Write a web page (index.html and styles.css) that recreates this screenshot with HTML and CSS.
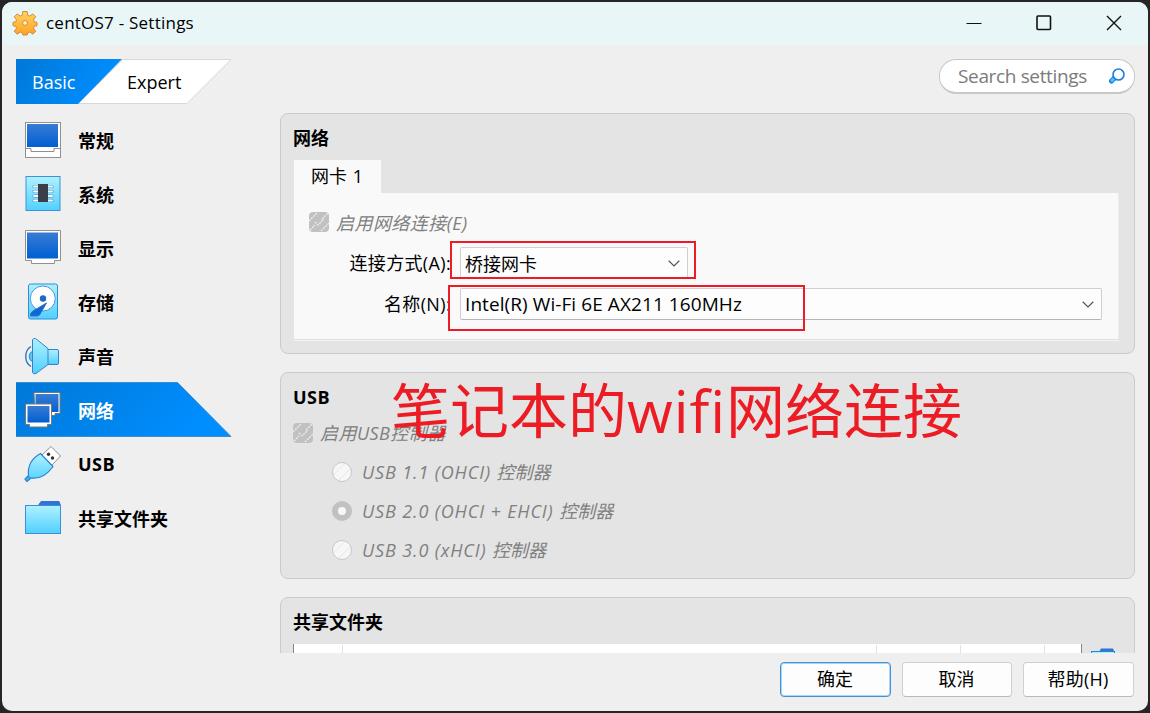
FILE: index.html
```html
<!DOCTYPE html>
<html lang="zh-CN">
  <head>
    <meta charset="UTF-8" />
    <title>centOS7 - Settings</title>
    <link rel="stylesheet" href="styles.css">
  </head>
  <body>
    <svg width="0" height="0" class="defs">
      <defs>
        <linearGradient id="cyan" x1="0" y1="0" x2="0" y2="1">
          <stop offset="0" stop-color="#b0f1ff" />
          <stop offset="1" stop-color="#50d0ff" />
        </linearGradient>
        <linearGradient id="blue" x1="0" y1="0" x2="0" y2="1">
          <stop offset="0" stop-color="#387bd4" />
          <stop offset="1" stop-color="#0060d2" />
        </linearGradient>
        <linearGradient id="gold" x1="0" y1="0" x2="0" y2="1">
          <stop offset="0" stop-color="#ffd45e" />
          <stop offset="1" stop-color="#fba325" />
        </linearGradient>
        <linearGradient id="accent" x1="0" y1="0" x2="1" y2="0.25">
          <stop offset="0" stop-color="#0078d7" />
          <stop offset="1" stop-color="#008eff" />
        </linearGradient>
      </defs>
    </svg>

    <div class="window">
      <div class="titlebar">
        <svg class="gear" width="26" height="26" viewBox="-13 -13 26 26">
          <g fill="url(#gold)" stroke="#d9883d" stroke-width="1">
            <path d="M-2.200-11.500h4.400l.6 3.800 2 .8 3-2.200 2.900 2.900-2.200 3 .8 2 2.700.5v3.400l-2.700.6-.8 2 2.200 3-2.900 2.900-3-2.200-2 .8-.6 2.200h-4.400l-.6-2.200-2-.8-3 2.200-2.900-2.900 2.200-3-.8-2-2.700-.6v-3.400l2.700-.5.8-2-2.200-3 2.900-2.900 3 2.200 2-.8z" />
            <circle r="2.400" fill="#fff3cf" />
          </g>
        </svg>
        <span class="caption">centOS7 - Settings</span>
        <div class="controls">
          <svg width="16" height="16" viewBox="0 0 16 16"><path d="M.5 8.500h15" /></svg>
          <svg width="16" height="16" viewBox="0 0 16 16"><rect x="1" y="1" width="13.500" height="13.500" rx="1" stroke-width="1.600" /></svg>
          <svg width="16" height="16" viewBox="0 0 16 16"><path d="M1 1l14 14M15 1L1 15" stroke-width="1.400" /></svg>
        </div>
      </div>

      <div class="toolbar">
        <div class="modes">
          <svg class="modes-bg" width="218" height="46" viewBox="0 0 218 46">
            <path d="M107 .5H215L171 44.500H62z" fill="#fff" stroke="#d8d8d8" />
            <path d="M0 0H106L62 45H0z" fill="url(#accent)" />
          </svg>
          <span class="mode basic">Basic</span>
          <span class="mode expert">Expert</span>
        </div>
        <div class="search">
          <span>Search settings</span>
          <svg width="16" height="16" viewBox="0 0 16 16">
            <path d="M5.500 10L2.500 13" stroke="#1681de" stroke-width="5" stroke-linecap="round" />
            <path d="M4.500 11L3 12.500" stroke="#4fc6ff" stroke-width="3" stroke-linecap="round" />
            <circle cx="9.500" cy="6.500" r="5.500" fill="#fff" stroke="#1c80df" stroke-width="1.600" />
          </svg>
        </div>
      </div>

      <div class="main">
        <div class="sidebar">
          <div class="item">
            <svg width="38" height="38" viewBox="0 0 38 38">
              <rect x="1.500" y="1.500" width="35" height="35" fill="#fff" stroke="#909090" />
              <rect x="3" y="3" width="31" height="23" fill="url(#blue)" />
              <path d="M2 27.500h5v3h23v-3h6" fill="none" stroke="#909090" />
            </svg>
            <span>常规</span>
          </div>
          <div class="item">
            <svg width="38" height="38" viewBox="0 0 38 38">
              <rect x="2" y="1.500" width="34" height="34" fill="url(#cyan)" stroke="#3a93de" />
              <path d="M10 11.500h18M10 16.500h18M10 21h18M10 25.500h18" stroke="#4595c9" stroke-width="3.200" stroke-linecap="round" />
              <path d="M10 11.500h18M10 16.500h18M10 21h18M10 25.500h18" stroke="#fff" stroke-width="1.900" stroke-linecap="round" />
              <rect x="14" y="9" width="10" height="18" fill="#3a3e48" />
            </svg>
            <span>系统</span>
          </div>
          <div class="item">
            <svg width="38" height="38" viewBox="0 0 38 38">
              <path d="M1.500 1.500h35v30h-6v3h-23v-3h-6z" fill="#fff" stroke="#909090" />
              <rect x="3" y="3.500" width="31" height="26" fill="url(#blue)" />
            </svg>
            <span>显示</span>
          </div>
          <div class="item">
            <svg width="38" height="38" viewBox="0 0 38 38">
              <rect x="4.500" y="1" width="29" height="35" rx="2" fill="url(#cyan)" stroke="#2e8cdb" />
              <circle cx="18.800" cy="15.500" r="12.500" fill="#fff" stroke="#4a98df" />
              <circle cx="19" cy="15.500" r="3.200" fill="#1c69c9" />
              <path d="M22.500 20L9 28q-3 2-2.500 5h7q3-1 3.500-3.500z" fill="#0f67cf" stroke="#2c74c9" stroke-linejoin="round" />
            </svg>
            <span>存储</span>
          </div>
          <div class="item">
            <svg width="38" height="38" viewBox="0 0 38 38">
              <path d="M7 9.500c-7 4-7 16 0 20" fill="none" stroke="#2c74c9" stroke-width="1.400" />
              <path d="M9 14c-5 2-5 9 0 11z" fill="#56c8f8" stroke="#2c82d2" />
              <path d="M23 12.500h10q1.500 0 1.500 1.500v12q0 1.500-1.500 1.500H23z" fill="url(#cyan)" stroke="#3482d1" />
              <path d="M8.500 2.500q0-1 3-1L24 11.500v16L12 36.500q-3 1-3.500-1z" fill="url(#cyan)" stroke="#3482d1" />
            </svg>
            <span>声音</span>
          </div>
          <div class="item active">
            <svg class="active-bg" width="216" height="55" viewBox="0 0 216 55">
              <path d="M0 .5H161.500L215 54.500H0" fill="url(#accent)" stroke="#388ed1" />
            </svg>
            <svg width="38" height="38" viewBox="0 0 38 38">
              <path d="M10 1.500h26v21h-5v2h-20z" fill="#fff" stroke="#777" />
              <rect x="11.500" y="3" width="23" height="18" fill="url(#blue)" />
              <path d="M1.500 13h26v20.500h-4v2.500h-18v-2.500h-4z" fill="#fff" stroke="#777" />
              <rect x="3.500" y="15" width="22" height="16.500" fill="url(#blue)" />
            </svg>
            <span>网络</span>
          </div>
          <div class="item">
            <svg width="38" height="38" viewBox="0 0 38 38">
              <path d="M18 10l9-8.500 9.500 9.500L28 20z" fill="#fff" stroke="#8e8e8e" />
              <path d="M16.500 8.500L29 21.500Q20 34.500 7 33L3 36.500l-2-2.500 3.500-3.500Q3 16 16.500 8.500z" fill="url(#cyan)" stroke="#2c84d5" stroke-width="1.200" />
              <path d="M4.500 31L1 34l2 2.500 3.500-3.500z" fill="#35b0f0" stroke="#2c84d5" />
              <circle cx="24.500" cy="9.300" r="1.700" fill="#333" />
              <circle cx="28.500" cy="13" r="1.700" fill="#333" />
            </svg>
            <span class="usb-label">USB</span>
          </div>
          <div class="item">
            <svg width="38" height="38" viewBox="0 0 38 38">
              <path d="M14 7l3-4.500h18l1.500 4z" fill="#2f75d6" stroke="#2f75d6" />
              <rect x="1.500" y="6.500" width="35" height="28" fill="url(#cyan)" stroke="#3b8ed9" />
            </svg>
            <span>共享文件夹</span>
          </div>
        </div>

        <div class="content">
          <div class="panel network">
            <h2>网络</h2>
            <div class="tab">网卡 1</div>
            <div class="pane">
              <div class="check-row disabled">
                <span class="box"><svg width="20" height="20" viewBox="0 0 20 20"><path d="M0 9l8-8M1 18l5-5M13 7l7-7M12 19l8-8M6 10l3 3 6-6" /></svg></span>
                <span>启用网络连接(E)</span>
              </div>
              <div class="field">
                <label>连接方式(A):</label>
                <div class="combo short"><span>桥接网卡</span><svg width="12" height="7" viewBox="0 0 12 7"><path d="M.7.8L6 6 11.300.8" /></svg></div>
              </div>
              <div class="field">
                <label>名称(N):</label>
                <div class="combo"><span class="adapter">Intel(R) Wi-Fi 6E AX211 160MHz</span><svg width="12" height="7" viewBox="0 0 12 7"><path d="M.7.8L6 6 11.300.8" /></svg></div>
              </div>
            </div>
          </div>

          <div class="panel usb">
            <h2 class="usb-label">USB</h2>
            <div class="check-row disabled">
              <span class="box"><svg width="20" height="20" viewBox="0 0 20 20"><path d="M0 9l8-8M1 18l5-5M13 7l7-7M12 19l8-8M6 10l3 3 6-6" /></svg></span>
              <span>启用USB控制器</span>
            </div>
            <div class="radio-row disabled"><span class="radio"></span><span><b>USB 1.1 (OHCI) </b>控制器</span></div>
            <div class="radio-row disabled"><span class="radio on"></span><span><b>USB 2.0 (OHCI + EHCI) </b>控制器</span></div>
            <div class="radio-row disabled"><span class="radio"></span><span><b>USB 3.0 (xHCI) </b>控制器</span></div>
          </div>

          <div class="panel shared">
            <h2>共享文件夹</h2>
            <div class="shared-row">
              <div class="table"><i></i><i></i><i></i><i></i><i></i></div>
              <svg width="24" height="24" viewBox="0 0 24 24">
                <path d="M8 4l2-3.500h12l1.500 3.500z" fill="#2f75d6" />
                <rect x=".5" y="3.500" width="23" height="18" fill="url(#cyan)" stroke="#2585d8" />
              </svg>
            </div>
          </div>
        </div>
      </div>

      <div class="footer">
        <button class="primary">确定</button>
        <button>取消</button>
        <button class="help">帮助(H)</button>
      </div>
    </div>

    <!-- hand-drawn notes over the dialog -->
    <div class="mark mark-mode"></div>
    <div class="mark mark-name"></div>
    <div class="note">笔记本的<span>wifi</span>网络连接</div>
  </body>
</html>
```

FILE: styles.css
```css
* {
  box-sizing: border-box;
}
body {
  margin: 0;
  padding: 2px;
  width: 1150px;
  height: 713px;
  overflow: hidden;
  background: #262425;
  color: #000;
  font-family: "Open Sans", "Noto Sans CJK SC", sans-serif;
  font-size: 18px;
}
.defs {
  position: absolute;
}
.window {
  height: 709px;
  width: 1146px;
  background: #efefef;
  border-radius: 10px;
  overflow: hidden;
  display: flex;
  flex-direction: column;
}
.titlebar {
  height: 43px;
  flex: none;
  background: #e8f6f7;
  display: flex;
  align-items: center;
  padding: 0 26px 2px 10px;
}
.caption {
  margin-left: 8px;
  font-size: 17px;
  letter-spacing: 0.23px;
  white-space: nowrap;
}
.controls {
  margin-left: auto;
  display: flex;
  gap: 54px;
}
.controls svg {
  fill: none;
  stroke: #111;
}
.toolbar {
  height: 67px;
  flex: none;
  padding: 14px 13px 0 14px;
  display: flex;
  justify-content: space-between;
}
.modes {
  position: relative;
  width: 218px;
  height: 46px;
  display: flex;
  align-items: center;
}
.modes-bg {
  position: absolute;
  top: 0;
  left: 0;
}
.mode {
  position: relative;
}
.basic {
  width: 95px;
  padding-left: 16px;
  color: #fff;
}
.expert {
  padding-left: 16px;
}
.search {
  width: 196px;
  height: 35px;
  background: #fff;
  border: 1px solid #c8c8c8;
  border-bottom-width: 2px;
  border-radius: 17px;
  padding: 0 9px 0 18px;
  display: flex;
  align-items: center;
  justify-content: space-between;
  color: #7b7b7b;
  font-size: 19px;
  letter-spacing: -0.35px;
  white-space: nowrap;
}
.search svg {
  fill: none;
}
.main {
  height: 541px;
  flex: none;
  display: flex;
  padding: 0 13px 0 14px;
}
.sidebar {
  width: 264px;
  flex: none;
}
.item {
  position: relative;
  height: 54px;
  display: flex;
  align-items: center;
  gap: 16px;
  padding: 2px 0 0 8px;
  font-weight: bold;
}
.item svg,
.item span {
  position: relative;
}
.item .active-bg {
  position: absolute;
  top: 0;
  left: 0;
}
.item.active {
  color: #fff;
}
.usb-label {
  letter-spacing: 0.5px;
}
.content {
  width: 855px;
  overflow: hidden;
  padding-top: 1px;
}
.panel {
  background: #e4e4e4;
  border: 1px solid #cbcbcb;
  border-radius: 8px;
  padding: 11px 12px 0;
  margin-bottom: 18px;
}
h2 {
  margin: 0;
  height: 27px;
  line-height: 26px;
  font-size: 18px;
}
.network {
  height: 241px;
  padding-left: 13px;
}
.network h2 {
  margin-left: -1px;
}
.tab {
  width: 87px;
  height: 33px;
  margin-top: 8px;
  padding-left: 17px;
  line-height: 32px;
  background: #f9f9f9;
  word-spacing: 1px;
}
.pane {
  width: 825px;
  height: 147px;
  background: #f9f9f9;
  border-bottom: 1px solid #dedede;
  border-right: 1px solid #ececec;
  box-shadow: 0 1px #f5f5f5;
  padding: 15px 16px 0 15px;
}
.check-row,
.radio-row {
  display: flex;
  align-items: center;
  white-space: nowrap;
}
.check-row {
  height: 28px;
  gap: 7px;
  letter-spacing: 0.45px;
}
.disabled {
  font-style: italic;
  color: #808080;
}
.disabled b {
  font-weight: normal;
  letter-spacing: 0.87px;
}
.box {
  width: 20px;
  height: 20px;
  background: #c1c1c1;
  border-radius: 4px;
  overflow: hidden;
}
.box svg {
  display: block;
  fill: none;
  stroke: #f1f1f1;
  stroke-width: 1.2;
  stroke-dasharray: 2 1;
}
.field {
  display: flex;
  align-items: center;
  height: 32px;
  margin-top: 10px;
}
.field:nth-child(2) {
  margin-top: 12px;
  height: 30px;
}
.field label {
  width: 142px;
  margin-right: 9px;
  padding-bottom: 2px;
  text-align: right;
  white-space: nowrap;
  letter-spacing: 0.35px;
}
.combo {
  width: 642px;
  height: 32px;
  background: #fdfdfd;
  border: 1px solid #d0d0d0;
  border-bottom-color: #b5b5b5;
  border-radius: 2px;
  display: flex;
  align-items: center;
  justify-content: space-between;
  padding: 0 7px 0 4px;
}
.combo.short {
  width: 228px;
}
.adapter {
  font-size: 19px;
  letter-spacing: 0.08px;
}
.combo svg {
  fill: none;
  stroke: #555;
  stroke-width: 1.2;
}
.usb {
  height: 207px;
}
.usb .check-row {
  margin-top: 8px;
}
.usb .check-row span:last-child {
  margin-top: -2px;
}
.radio-row {
  height: 39px;
  padding-left: 39px;
  gap: 10px;
}
.radio-row span:last-child {
  margin-top: -2px;
}
.usb .radio-row:nth-child(3) {
  margin-top: 5px;
}
.radio {
  width: 20px;
  height: 20px;
  border: 1px solid #c8c8c8;
  border-radius: 50%;
  background: linear-gradient(135deg, #f7f7f7 32%, #e6e6e6 34%, #f7f7f7 37%, #f7f7f7 62%, #e6e6e6 64%, #f7f7f7 67%);
}
.radio.on {
  border: 6px solid #c1c1c1;
  background: #f8f8f8;
}
.shared {
  height: 200px;
}
.shared-row {
  display: flex;
  margin-top: 8px;
  gap: 9px;
}
.shared-row svg {
  margin-top: 4px;
}
.table {
  width: 789px;
  height: 120px;
  background: #fff;
  border-left: 1px solid #7f868d;
  border-right: 1px solid #7f868d;
  display: grid;
  grid-template-columns: 49px 534px 84px 84px 1fr;
}
.table i {
  border-right: 1px solid #e2e2e2;
  margin-top: 1px;
}
.table i:last-child {
  border: 0;
}
.footer {
  display: flex;
  justify-content: flex-end;
  gap: 11px;
  padding: 9px 14px 0 0;
}
button {
  width: 110px;
  height: 35px;
  background: #fdfdfd;
  border: 1px solid #d0d0d0;
  border-bottom-color: #b9b9b9;
  border-radius: 4px;
  font: inherit;
  padding: 0 1px 3px 0;
}
button.primary {
  width: 111px;
  border: 1px solid #3c93da;
  box-shadow: inset 0 0 0 1px #b0d4f0;
}
button.help {
  width: 111px;
  letter-spacing: 0.2px;
}
.mark {
  position: absolute;
  border: 2px solid #ed1c24;
}
.mark-mode {
  left: 450px;
  top: 241px;
  width: 246px;
  height: 38px;
}
.mark-name {
  left: 448px;
  top: 285px;
  width: 357px;
  height: 46px;
}
.note {
  position: absolute;
  left: 391px;
  top: 366px;
  font-size: 59px;
  line-height: 88px;
  color: #ed1c24;
  white-space: nowrap;
}
.note span {
  letter-spacing: 0.9px;
}
```
